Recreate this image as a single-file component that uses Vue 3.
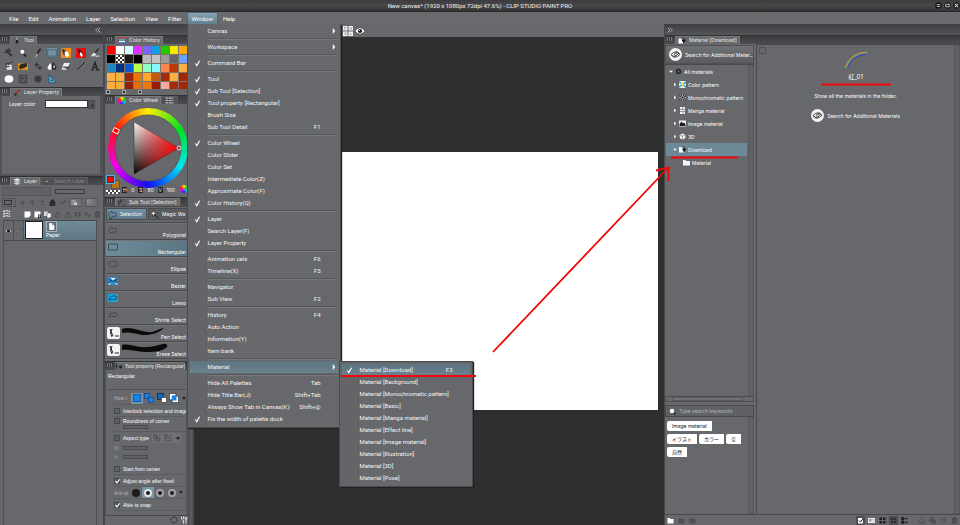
<script setup>
const menusBefore = ['File', 'Edit', 'Animation', 'Layer', 'Selection', 'View', 'Filter']

const groups = [
  [{ t: 'Canvas', sub: true }],
  [{ t: 'Workspace', sub: true }],
  [{ t: 'Command Bar', on: true }],
  [
    { t: 'Tool', on: true },
    { t: 'Sub Tool [Selection]', on: true },
    { t: 'Tool property [Rectangular]', on: true },
    { t: 'Brush Size' },
    { t: 'Sub Tool Detail', k: 'F1' },
  ],
  [
    { t: 'Color Wheel', on: true },
    { t: 'Color Slider' },
    { t: 'Color Set' },
    { t: 'Intermediate Color(Z)' },
    { t: 'Approximate Color(F)' },
    { t: 'Color History(Q)', on: true },
  ],
  [{ t: 'Layer', on: true }, { t: 'Search Layer(F)' }, { t: 'Layer Property', on: true }],
  [{ t: 'Animation cels', k: 'F6' }, { t: 'Timeline(X)', k: 'F5' }],
  [{ t: 'Navigator' }, { t: 'Sub View', k: 'F2' }],
  [{ t: 'History', k: 'F4' }, { t: 'Auto Action' }, { t: 'Information(Y)' }, { t: 'Item bank' }],
  [{ t: 'Material', sub: true, open: true }],
  [
    { t: 'Hide All Palettes', k: 'Tab' },
    { t: 'Hide Title Bar(J)', k: 'Shift+Tab' },
    { t: 'Always Show Tab in Canvas(K)', k: 'Shift+@' },
    { t: 'Fix the width of palette dock', on: true },
  ],
]

const materials = [
  'Download', 'Background', 'Monochromatic pattern', 'Basic', 'Manga material',
  'Effect line', 'Image material', 'Illustration', '3D', 'Pose',
]

const tools = [
  { n: 'Operation', d: '<path d="M3 4l9 9M7 1l2 3M1 7l3 1M4 2l2 5 5-3" stroke="#2c2c2e" stroke-width="2" fill="none"/><path d="M9 8l5 3-3 1 0 3z" fill="#2c2c2e"/>' },
  { n: 'Zoom', d: '<path d="M9 9l4 5" stroke="#222" stroke-width="2.6"/><circle cx="7" cy="6" r="4" fill="#fff" stroke="#333" stroke-width="1"/>' },
  { n: 'Eyedropper', d: '<path d="M4 15l5-9" stroke="#bbb" stroke-width="1.6"/><path d="M7 9l5-8" stroke="#222" stroke-width="3"/>' },
  { n: 'Selection', on: true, d: '<rect x="1" y="3" width="14" height="10" fill="none" stroke="#202c34" stroke-width="1" stroke-dasharray="2 1"/>' },
  { n: 'Pen', d: '<rect width="16" height="16" fill="#f58a12"/><path d="M1 1l6 2 4 8-2 4-5-5z" fill="#333"/><path d="M6 5l5 1 2 6-4 3-3-4z" fill="#fff"/>' },
  { n: 'Marker', d: '<rect width="16" height="16" fill="#f4060c"/><path d="M3 1l5 3 3 7-2 3-4-5z" fill="#222"/><path d="M7 6l4 5-2 4-3-5z" fill="#fff"/>' },
  { n: 'Brush', d: '<path d="M14 1l-6 7" stroke="#222" stroke-width="2"/><path d="M1 13l5-6 4 2-2 4z" fill="#ddd"/><path d="M9 13h6" stroke="#ccc" stroke-width="2"/>' },
  { n: 'Airbrush', d: '<path d="M5 6h7l1 8H4z" fill="#e4e4e4"/><path d="M1 5l6-1 7-3M3 9h6M7 3v4" stroke="#333" stroke-width="1.5" fill="none"/>' },
  { n: 'Decoration', d: '<path d="M0 4h16v10H0z" fill="#f5930f"/><path d="M1 9l3-4 10-2 1 5-5 3-7 2z" fill="#2d2a22"/>' },
  { n: 'Effect', d: '<path d="M6 2v8M2 6h8M11 8v6M8 11h6" stroke="#35353a" stroke-width="1.8"/>' },
  { n: 'Blend', d: '<path d="M5 3l4 7q0 4-4 4t-4-4z" fill="#fff"/><path d="M10 1l5 8q0 5-4 5t-4-4z" fill="#222"/><path d="M11 5l2 5-3 2z" fill="#eee"/>' },
  { n: 'Eraser', d: '<path d="M5 3h9l-2 6H2z" fill="#f0f0f0"/><path d="M2 10h8l-1 4H1z" fill="#ddd"/><path d="M2 9h10l2-5v4l-3 5z" fill="#444"/>' },
  { n: 'Figure', d: '<path d="M2 14L14 2" stroke="#222" stroke-width="1.6"/>' },
  { n: 'Text', d: '<path d="M2 14h4M9 14h6M4 13L8 2l4 12M5 10h6" stroke="#222" stroke-width="2" fill="none"/>' },
  { n: 'Balloon', d: '<ellipse cx="8" cy="8" rx="7" ry="6" fill="#fff"/>' },
  { n: 'Frame', d: '<path d="M2 2h12v12H2zM2 6h12M6 6v8M9 8l3 5" stroke="#3b3b3f" stroke-width="1.6" fill="none"/>' },
  { n: 'Gradient', d: '<circle cx="8" cy="8" r="6" fill="#47474a"/><circle cx="8" cy="8" r="4" fill="#3a3a3c"/>' },
  { n: 'Ruler', d: '<path d="M3 1v13h12z" fill="#49b4ea" stroke="#1d3b4c" stroke-width="1"/><path d="M6 8v3h4z" fill="#333"/>' },
]

const swatches = [
  '#ff0000', '#ffffff', '#d8ffff', '#d933ff', '#7a63ff', '#0aa0e6', '#28c800', '#f8e800', '#ffaa0a',
  '#000000', 'checker', '#1a1a1a', '#000000', '#b8babc', '#c4c4c4', '#9a9a9a', '#66666a', '#6aa2ff',
  '#2585b8', '#003080', '#0a5cd0', '#b8ff46', '#8cffc4', '#88faff', '#ff8450', '#b83a08', '#ffb043',
  '#ffb043', '#ffb043', '#98240a', '#e8780e', '#ffa82a', '#c05a0c', '#a8280a', '#ffb043', '#a02808',
  '#ffae3e', '#ffae3e', '#902008', '#e0700e', '#e87a10', '#981c08', '#f8a8a0', '#a82a08', '#a02808',
]

const subTools = [
  { t: 'Polygonal', d: '<path d="M1 7l7-5v3h9v7H8v2H4z" fill="none" stroke="#3a3a3e" stroke-width="1.2"/>' },
  { t: 'Rectangular', on: true, d: '<rect x="1" y="2" width="18" height="12" fill="none" stroke="#24343e" stroke-width="1.4"/>' },
  { t: 'Ellipse', d: '<ellipse cx="10" cy="8" rx="9" ry="5.5" fill="none" stroke="#3a3a3e" stroke-width="1.2"/>' },
  { t: 'Bezier', d: '<rect width="20" height="16" fill="#2f8fd0"/><path d="M2 13q2-9 8-4 6-5 8 4M2 3l6 6M18 3l-6 6" stroke="#0d2c48" stroke-width="1.6" fill="none"/><path d="M5 2h10l-5 5z" fill="#e8f4fb"/><path d="M1 12h4v3H1zM15 12h4v3h-4z" fill="#bfe0f4"/>' },
  { t: 'Lasso', d: '<rect width="20" height="16" fill="#16a5de"/><path d="M4 13c-4-6 3-10 10-9s4 8-3 7-5-1-7 2" fill="none" stroke="#0b3550" stroke-width="1.6"/>' },
  { t: 'Shrink Select', d: '<path d="M3 13c-4-6 4-10 11-9s4 8-3 7-5-1-7 2" fill="none" stroke="#35353a" stroke-width="1.4"/>' },
  { t: 'Pen Select', pen: 'M1 3C10 0 18 5 26 6S36 3 43 2C38 7 30 9 24 9S8 5 1 7z' },
  { t: 'Erase Select', pen: 'M1 2C8 0 15 5 26 4S36 2 42 1c5-1 5 3 3 4-6 4-13 4-21 4S8 6 1 7z' },
]

const tree = [
  { t: 'All materials', lv: 0, open: true, d: '<circle cx="7" cy="7" r="5.5" fill="#2a2a2c"/><circle cx="7" cy="7" r="2" fill="#777"/>' },
  { t: 'Color pattern', lv: 1, d: '<rect width="14" height="14" fill="#eef6fa"/><path d="M0 0l7 5 7-5v5L9 7l5 3v4L7 9l-7 5v-4l5-3-5-3z" fill="#3aa7d8"/><path d="M4 5l3-3 3 3-3 7z" fill="#f2e04a"/>' },
  { t: 'Monochromatic pattern', lv: 1, d: '<rect x="1" y="1" width="12" height="12" fill="#3a3a3c"/><path d="M7 0v14M0 7h14M2 2l10 10M12 2L2 12" stroke="#ddd" stroke-width="1.2"/><circle cx="7" cy="7" r="2" fill="#333"/>' },
  { t: 'Manga material', lv: 1, d: '<path d="M2 0h10v14H2z" fill="#f2f2f2"/><path d="M2 5h10M7 0v5M2 9h10M8 9v5" stroke="#444" stroke-width="1"/>' },
  { t: 'Image material', lv: 1, d: '<rect x="0" y="1" width="14" height="12" fill="#f2f2f2"/><path d="M1 12V8l4-5 3 4 2-2 3 4v3z" fill="#1a1a1a"/>' },
  { t: '3D', lv: 1, d: '<path d="M1 4l6-3 6 3v6l-5 3-6-2z" fill="#f0f0f0"/><path d="M7 6l6-2M7 6v7M7 6L1 4" stroke="#666" fill="none"/>' },
  { t: 'Download', lv: 1, open: true, on: true, d: '<path d="M0 2h5l1 2h3v9H0z" fill="#fff"/><path d="M10 1v6M7 6h7l-4 5z" stroke="#111" fill="#111" stroke-width="1.5"/>' },
  { t: 'Material', lv: 2, d: '<path d="M0 2h5l1 2h8v9H0z" fill="#f4f4f4"/>' },
]

const tagRows = [['Image material'], ['イラスト', 'カラー', '空'], ['自然']]

const layerRow1 = ['<path d="M2 8q5-8 10 0-5 6-10 0" fill="#505155"/>', '<path d="M7 1v12M4 4h6v5H4z" stroke="#505155" stroke-width="1.6" fill="none"/>', '<path d="M7 1v12M3 5h8" stroke="#505155" stroke-width="2"/>']
const layerRow2 = [
  { n: 'New raster layer', d: '<path d="M1 1h12v8l-4 4H1z" fill="#fff"/>' },
  { n: 'New vector layer', d: '<path d="M1 1h12v8l-4 4H1z" fill="#fff"/><path d="M8 7h6v7H8z" fill="#2c2c2e"/><path d="M11 8v5M9 10h4" stroke="#fff"/>' },
  { n: 'New folder', d: '<path d="M0 1h8v9H0z" fill="#ddd"/><path d="M6 4h8v7l-3 3H6z" fill="#fff" stroke="#333"/>' },
  { n: 'Transfer down', d: '<path d="M7 1v6M4 4l3 4 3-4M2 8q0 5 5 5t5-5" stroke="#48494d" stroke-width="1.5" fill="none"/>' },
  { n: 'Combine', d: '<path d="M7 1v6M4 4l3 4 3-4M2 8v5h10V8" stroke="#48494d" stroke-width="1.5" fill="none"/>' },
  { n: 'Create mask', d: '<path d="M1 3h12v8H1z" fill="#4d4e52"/><circle cx="7" cy="7" r="2" fill="#77787c"/>' },
  { n: 'Apply mask', d: '<path d="M1 2h7v8H1zM6 6h7v7H6z" fill="#4d4e52" stroke="#77787c"/>' },
  { n: 'Delete layer', d: '<path d="M2 3h10M5 1h4M3 4l1 9h6l1-9" stroke="#48494d" stroke-width="2" fill="#55565a"/>' },
]

const shapeModes = [
  { n: 'New selection', on: true, d: '<rect x="2" y="2" width="12" height="12" fill="#1583e8" stroke="#0a3f88"/>' },
  { n: 'Add to selection', d: '<rect x="1" y="1" width="8" height="8" fill="#1583e8" stroke="#0a3f88"/><rect x="7" y="7" width="8" height="8" fill="#1583e8" stroke="#0a3f88"/>' },
  { n: 'Subtract from selection', d: '<rect x="1" y="1" width="9" height="9" fill="#1568b8" stroke="#111"/><rect x="7" y="7" width="8" height="8" fill="#fff" stroke="#333"/>' },
  { n: 'Select from selection', d: '<rect x="1" y="1" width="10" height="10" fill="#fff" stroke="#333"/><rect x="5" y="5" width="10" height="10" fill="#fff" stroke="#333"/><rect x="5" y="4" width="7" height="8" fill="#1583e8"/>' },
]
const antiAlias = ['None', 'Weak', 'Medium', 'Strong']

const footIcons = [
  { n: 'Show thumbnails', on: true, d: '<path d="M2 2h10v11H2z" fill="#fff"/><path d="M4 7l3 3 6-8" stroke="#111" stroke-width="2" fill="none"/>' },
  { n: 'Details', d: '<path d="M0 2h14v10H0z" fill="#eee"/><path d="M2 4h5v5H2z" fill="#999"/><path d="M9 5h4M9 8h4" stroke="#888"/>' },
  { n: 'Large tiles', d: '<path d="M1 1h5v5H1zM8 1h5v5H8zM1 8h5v5H1zM8 8h5v5H8z" fill="#1d1d1f"/>' },
  { n: 'Small tiles', on: true, d: '<path d="M2 2h4v4H2zM8 2h4v4H8zM2 8h4v4H2zM8 8h4v4H8z" fill="#2b2b2d"/>' },
  { n: 'List', d: '<path d="M1 1h5v5H1zM1 8h5v5H1zM8 3h5v1H8zM8 10h5v1H8z" fill="#1d1d1f" stroke="#1d1d1f"/>' },
]
const footIconsDim = [
  { n: 'Paste material', d: '<path d="M2 13V6l5-4 5 4v7zM5 9h4" fill="none" stroke="#4c4d51" stroke-width="1.6"/>' },
  { n: 'Duplicate material', d: '<path d="M1 1h8v8H1zM6 6h7v7H6z" fill="#56575b" stroke="#48494d"/>' },
  { n: 'Material property', d: '<circle cx="7" cy="7" r="4" fill="none" stroke="#4c4d51" stroke-width="3" stroke-dasharray="2 1"/>' },
  { n: 'Delete material', d: '<path d="M2 3h10M5 1h4M3 4l1 9h6l1-9" stroke="#48494d" stroke-width="2" fill="#55565a"/>' },
]
</script>

<template>
  <div class="app">
    <header class="titlebar">
      <span class="title">New canvas* (1920 x 1080px 72dpi 47.6%) - CLIP STUDIO PAINT PRO</span>
      <span class="winbtns">
        <button aria-label="Minimize"><svg viewBox="0 0 16 16"><circle cx="8" cy="8" r="7.5" fill="#151515" /><path d="M4 6h8M4 10h8" stroke="#ddd" stroke-width="2" /></svg></button>
        <button aria-label="Maximize"><svg viewBox="0 0 16 16"><circle cx="8" cy="8" r="7.5" fill="#151515" /><path d="M4 5h8v6H4z" stroke="#ddd" stroke-width="2" fill="none" /></svg></button>
        <button aria-label="Close"><svg viewBox="0 0 16 16"><circle cx="8" cy="8" r="7.5" fill="#151515" /><path d="M4 4l8 8M12 4l-8 8" stroke="#eee" stroke-width="2.4" /></svg></button>
      </span>
    </header>

    <nav class="menubar">
      <button v-for="m in menusBefore" :key="m" class="mb">{{ m }}</button>
      <div class="mbwrap">
        <button class="mb active">Window</button>
        <div class="menu">
          <div v-for="(g, i) in groups" :key="i" class="group">
            <div v-for="it in g" :key="it.t" class="itemwrap">
              <button class="item" :class="{ open: it.open }">
                <span class="chk"><svg v-if="it.on" viewBox="0 0 10 10"><path d="M2 5l2 3 4-7" /></svg></span>
                <span class="lbl">{{ it.t }}</span>
                <span v-if="it.k" class="key">{{ it.k }}</span>
                <svg v-if="it.sub" class="arr" viewBox="0 0 6 10"><path d="M1 0l4 5-4 5z" fill="#fff" /></svg>
              </button>
              <div v-if="it.open" class="menu submenu">
                <button v-for="(s, j) in materials" :key="s" class="item" :class="{ open: j === 0 }">
                  <span class="chk"><svg v-if="j === 0" viewBox="0 0 10 10"><path d="M2 5l2 3 4-7" /></svg></span>
                  <span class="lbl">Material [{{ s }}]</span>
                  <span v-if="j === 0" class="key">F3</span>
                </button>
              </div>
            </div>
          </div>
        </div>
      </div>
      <button class="mb">Help</button>
    </nav>

    <div class="work">
      <!-- first dock -->
      <aside class="dock dock1">
        <div class="band"><svg class="chev" viewBox="0 0 10 10"><path d="M5 1L1 5l4 4M9 1L5 5l4 4" /></svg></div>
        <div class="tabs">
          <i class="grip"></i>
          <span class="tab"><svg viewBox="0 0 10 16"><path d="M5 0v8" stroke="#ccc" stroke-width="1.5" /><path d="M3 7h4l1 5-3 4-3-4z" fill="#222" /></svg>Tool</span>
        </div>
        <div class="tools">
          <button v-for="t in tools" :key="t.n" :aria-label="t.n" :class="{ on: t.on }"><svg viewBox="0 0 16 16" v-html="t.d"></svg></button>
        </div>
        <div class="tabs">
          <i class="grip"></i>
          <span class="tab"><svg viewBox="0 0 16 16"><path d="M14 1L7 9" stroke="#c2201c" stroke-width="3" /><path d="M1 14l3-5 4 2-2 4z" fill="#111" /><path d="M3 12l3-3 2 2z" fill="#e02a20" /></svg>Layer Property</span>
        </div>
        <div class="layerprop">
          <div class="lc"><span>Layer color</span><button class="colorbox" aria-label="Layer color"></button><button class="colormore" aria-label="More colors"><svg viewBox="0 0 6 10"><path d="M1 1l4 4-4 4z" fill="#222" /></svg></button></div>
        </div>
        <div class="tabs">
          <i class="grip"></i>
          <span class="tab"><svg viewBox="0 0 16 16"><path d="M1 4l7-3 7 3-7 3zM1 8l7 3 7-3M1 12l7 3 7-3" fill="#eee" stroke="#eee" /></svg>Layer</span>
          <span class="tab dim"><svg viewBox="0 0 16 16"><path d="M1 8l7-3 5 3-5 3zM3 13l6 2" fill="#999" stroke="#333" /></svg>Search Layer</span>
        </div>
        <div class="layertools">
          <div class="lrow"><select class="blend" aria-label="Blending mode"><option></option></select><span class="opacity"></span></div>
          <div class="lrow icons">
            <button class="pal" aria-label="Palette color"><i></i></button>
            <button v-for="(d, i) in layerRow1" :key="i" :aria-label="'Layer option ' + (i + 1)"><svg viewBox="0 0 14 14" v-html="d"></svg></button>
            <button aria-label="Lock layer"><svg viewBox="0 0 14 14"><path d="M4 6V3q3-3 6 0v3M2 6h10v7H2z" stroke="#222" stroke-width="1.6" fill="#333" /></svg></button>
            <button aria-label="Lock transparency"><svg viewBox="0 0 14 14"><path d="M1 11l5-5 3 3 4-7" stroke="#444" stroke-width="2" fill="none" /></svg></button>
            <button class="wide" aria-label="Mask options"><svg viewBox="0 0 14 14"><path d="M1 2h9v9H1z" fill="#999" /><path d="M5 6h8v7H5z" fill="#ccc" stroke="#555" /></svg></button>
            <button class="wide" aria-label="Ruler options"><svg viewBox="0 0 14 14"><path d="M1 2h9L2 11zM6 13l7-8" fill="#777" stroke="#aaa" /></svg></button>
          </div>
          <div class="lrow icons second">
            <svg class="stack" viewBox="0 0 16 16"><path d="M1 3q7-3 14 0M1 8q7-3 14 0M1 13q7-3 14 0" stroke="#eee" stroke-width="2.4" fill="none" stroke-dasharray="5 1" /></svg>
            <span class="fill"></span>
            <button v-for="b in layerRow2" :key="b.n" :aria-label="b.n"><svg viewBox="0 0 14 14" v-html="b.d"></svg></button>
          </div>
        </div>
        <div class="layers">
          <div class="layer">
            <span class="cell"><svg viewBox="0 0 16 12"><path d="M1 6q7-7 14 0-7 7-14 0" fill="#ccc" /><circle cx="8" cy="6" r="3.500" fill="#111" /></svg></span>
            <span class="cell"><svg viewBox="0 0 16 16"><path d="M2 14l3-5 8-7-5 8z" fill="#ddd" stroke="#222" /></svg></span>
            <span class="lmain"><i class="thumb"></i><span class="lname"><svg viewBox="0 0 20 20"><rect x="1" y="1" width="18" height="18" fill="#5d7684" stroke="#dde" /><path d="M5 3h7l4 4v10H5z" fill="#fff" stroke="#333" /><path d="M12 3v4h4" fill="none" stroke="#333" /></svg>Paper</span></span>
          </div>
        </div>
      </aside>

      <!-- second dock -->
      <aside class="dock dock2">
        <div class="band"></div>
        <div class="tabs">
          <i class="grip"></i>
          <span class="tab"><svg viewBox="0 0 14 16"><path d="M0 1h14v3H0z" fill="#e33" /><path d="M0 5h14v3H0z" fill="#4bd" /><path d="M0 9h14v3H0z" fill="#eee" /><path d="M0 13h14v3H0z" fill="#3a6ae0" /></svg>Color History</span>
        </div>
        <div class="swatches">
          <button v-for="(c, i) in swatches" :key="i" :aria-label="'Color ' + (i + 1)" :class="{ checker: c === 'checker' }" :style="c === 'checker' ? null : { backgroundColor: c }"></button>
        </div>
        <div class="swbtns"><i></i><i></i><i></i></div>
        <div class="tabs">
          <i class="grip"></i>
          <span class="tab"><i class="miniwheel"></i>Color Wheel</span>
          <span class="tab dim sliders"><svg viewBox="0 0 16 12"><path d="M1 2h14M1 6h14M1 10h14" stroke="#bbb" stroke-width="2" stroke-dasharray="5 1" /></svg></span>
        </div>
        <div class="wheelbox">
          <div class="wheel">
            <svg viewBox="0 0 80 80">
              <defs>
                <linearGradient id="bw" x1="0" y1="0" x2="0" y2="1"><stop offset="0" stop-color="#fff" /><stop offset="1" stop-color="#000" /></linearGradient>
                <linearGradient id="rd" x1="0" y1="0" x2="1" y2="0"><stop offset="0" stop-color="#f00" stop-opacity="0" /><stop offset="1" stop-color="#f00" /></linearGradient>
              </defs>
              <circle cx="40" cy="40" r="33" fill="#67686c" stroke="#55565a" stroke-width="1" />
              <path d="M26 14v52l45-26z" fill="url(#bw)" />
              <path d="M26 14v52l45-26z" fill="url(#rd)" stroke="#333" stroke-width=".5" />
              <circle cx="71" cy="40" r="2" fill="none" stroke="#ddd" stroke-width="1" />
              <path d="M6.500 19.500l5 2.500-2 4-5-2.500z" fill="#f00" stroke="#fff" stroke-width="1" />
            </svg>
          </div>
          <div class="wheelfoot">
            <span class="curcol"><i class="bg"></i><i class="fg"></i><i class="tr"></i></span>
            <span class="hsv"><b>H</b>0<b>S</b>50<b>V</b>100</span>
            <i class="miniwheel"></i>
          </div>
        </div>
        <div class="tabs">
          <i class="grip"></i>
          <span class="tab"><svg viewBox="0 0 18 16"><path d="M2 3v12M6 0v8" stroke="#222" stroke-width="2" /><rect x="9" y="2" width="8" height="12" fill="none" stroke="#222" stroke-dasharray="2 1" /></svg>Sub Tool [Selection]</span>
        </div>
        <div class="stgroups">
          <button class="on"><svg viewBox="0 0 16 16"><path d="M1 6l6-4v3h7v7H7v3H3z" fill="none" stroke="#2a3b45" stroke-width="1.200" /></svg>Selection</button>
          <button><svg viewBox="0 0 16 16"><path d="M7 7l8 8" stroke="#222" stroke-width="2" /><path d="M6 0l1.500 4.500L12 6 7.500 7.500 6 12 4.500 7.500 0 6l4.500-1.500z" fill="#fff" stroke="#222" /></svg>Magic Wa</button>
        </div>
        <div class="subtools">
          <button v-for="s in subTools" :key="s.t" :class="{ on: s.on }">
            <svg v-if="s.d" class="sico" viewBox="0 0 20 16" v-html="s.d"></svg>
            <svg v-else class="spen" viewBox="0 0 74 16"><rect width="13" height="12" y="1" rx="2" fill="#f3f3f3" /><path d="M3 3l3 7M5 3q-3 4 0 8M8 10h4" stroke="#222" fill="none" /><path :d="s.pen" fill="#0b0b0b" transform="translate(14 0)" /></svg>
            <span>{{ s.t }}</span>
          </button>
        </div>
        <div class="tabs">
          <i class="grip"></i>
          <span class="tab snug"><svg viewBox="0 0 20 16"><path d="M4 0v14M1 7h5" stroke="#222" stroke-width="2" /><circle cx="14" cy="9" r="4" fill="#222" /></svg>Tool property [Rectangular]</span>
        </div>
        <div class="props">
          <div class="phead">Rectangular</div>
          <div class="prow mode">
            <span class="pl">How t</span>
            <button v-for="m in shapeModes" :key="m.n" :aria-label="m.n" :class="{ on: m.on }"><svg viewBox="0 0 16 16" v-html="m.d"></svg></button>
            <i class="dd"></i>
          </div>
          <label class="prow"><input type="checkbox">Interlock selection and image</label>
          <div class="prow two">
            <label><input type="checkbox">Roundness of corner</label><i class="bar"></i>
          </div>
          <div class="prow aspect">
            <label><input type="checkbox">Aspect type</label>
            <span class="modes"><svg viewBox="0 0 14 14"><path d="M1 1h5v5H1zM7 7h5v5H7zM12 1L1 12" fill="none" stroke="#4b4c50" stroke-width="1.500" /></svg><svg viewBox="0 0 14 14"><path d="M1 1h4v4H1zM2 7h10v5H2zM8 5l5-4" fill="none" stroke="#4b4c50" stroke-width="1.500" /></svg><i class="dd"></i></span>
          </div>
          <div class="wh"><div>W<i class="bar"></i></div><div>H<i class="bar"></i></div></div>
          <label class="prow"><input type="checkbox">Start from center</label>
          <label class="prow"><input type="checkbox" checked>Adjust angle after fixed</label>
          <div class="prow aa">
            <span class="pl">Anti-al</span>
            <button v-for="(a, i) in antiAlias" :key="a" :aria-label="a" :class="{ on: i === 1 }"><i :class="'dot d' + i"></i></button>
            <i class="dd"></i>
          </div>
          <label class="prow last"><input type="checkbox" checked>Able to snap</label>
          <i class="pscroll"></i>
        </div>
        <div class="pfoot">
          <svg viewBox="0 0 16 16"><circle cx="8" cy="8" r="6" fill="none" stroke="#1f1f21" stroke-width="2" stroke-dasharray="3 1.500" /></svg>
          <svg viewBox="0 0 16 16"><path d="M3 1v5l4 3v6M7 1v5M12 1v14M9 3l3 4 4-4" fill="none" stroke="#e0e0e0" stroke-width="2" /></svg>
        </div>
      </aside>

      <main class="center">
        <div class="cmdbar">
          <svg viewBox="0 0 20 20"><path d="M0 0h9v9H0zM11 0h9v9h-9zM0 11h9v9H0zM11 11h9v9h-9z" fill="#eee" /><path d="M3 3h4M3 3v4M14 3v4M17 3v4M3 14h4M5 14v4M14 14l3 4" stroke="#777" stroke-width="1.200" /></svg>
          <svg viewBox="0 0 20 20"><path d="M0 10q10-13 20 0-10 13-20 0" fill="#fff" stroke="#222" stroke-width="1" /><circle cx="10" cy="10" r="4" fill="#111" /><circle cx="9" cy="9" r="1.200" fill="#fff" /></svg>
        </div>
        <div class="stage"><div class="paper"></div></div>
      </main>

      <!-- material dock -->
      <aside class="dock dock3">
        <div class="band left"><svg class="chev" viewBox="0 0 10 10"><path d="M1 1l4 4-4 4M5 1l4 4-4 4" /></svg></div>
        <div class="tabs">
          <i class="grip"></i>
          <span class="tab"><svg viewBox="0 0 14 14"><path d="M0 3h5l1 2h3v8H0z" fill="#fff" /><path d="M10 1v6M7 6h7l-4 5z" stroke="#111" fill="#111" stroke-width="1.500" /></svg>Material [Download]</span>
        </div>
        <div class="mat">
          <div class="matleft">
            <button class="searchadd"><svg class="logo" viewBox="0 0 24 24"><circle cx="12" cy="12" r="12" fill="#f4f4f4" /><path d="M4 12q7-9 16 0-8 9-16 0M9 12q3-5 7 0-3 5-7 0M4 12q3 6 8 5M20 12q-2-6-8-5" fill="none" stroke="#333" stroke-width="1.600" /></svg><span>Search for Additional Mater...</span></button>
            <div class="treebox">
              <ul class="tree">
                <li v-for="n in tree" :key="n.t"><button :class="['lv' + n.lv, { on: n.on }]">
                  <svg v-if="n.lv < 2" class="tw" viewBox="0 0 10 10"><path :d="n.open ? 'M0 3h10L5 8z' : 'M3 0l5 5-5 5z'" fill="#fff" /></svg>
                  <svg class="ti" viewBox="0 0 14 14" v-html="n.d"></svg>{{ n.t }}</button></li>
              </ul>
              <i class="vs"></i>
            </div>
            <div class="hs"><i></i></div>
            <label class="kw"><svg viewBox="0 0 14 14"><path d="M8 8l5 5" stroke="#222" stroke-width="2.500" /><circle cx="6" cy="6" r="4.500" fill="#fff" /></svg><input type="text" placeholder="Type search keywords" aria-label="Type search keywords"></label>
            <div class="tagbox">
              <div class="tags">
                <div v-for="(row, i) in tagRows" :key="i" class="tagrow"><button v-for="t in row" :key="t">{{ t }}</button></div>
              </div>
              <i class="vs"></i>
            </div>
          </div>
          <div class="matmain">
            <div class="list">
              <input type="checkbox" class="all" aria-label="Select all">
              <svg class="rainbow" viewBox="0 0 24 18" fill="none" stroke-width="1"><path d="M1 17Q6 1 23 1" stroke="#d8863c" /><path d="M1.800 17Q7 1.800 23 1.800" stroke="#7cb84a" /><path d="M2.600 17Q8 2.600 23 2.600" stroke="#2b9ac0" /><path d="M3.400 17Q9 3.400 22 3.400" stroke="#5a2ab8" /></svg>
              <span class="rname">虹_01</span>
              <span class="show">Show all the materials in the folder.</span>
              <a href="#" class="addlink"><svg class="logo" viewBox="0 0 24 24"><circle cx="12" cy="12" r="12" fill="#f4f4f4" /><path d="M4 12q7-9 16 0-8 9-16 0M9 12q3-5 7 0-3 5-7 0M4 12q3 6 8 5M20 12q-2-6-8-5" fill="none" stroke="#333" stroke-width="1.600" /></svg>Search for Additional Materials</a>
            </div>
            <i class="vs"></i>
          </div>
        </div>
        <div class="matfoot">
          <button aria-label="New folder"><svg viewBox="0 0 14 14"><path d="M1 2h5l1 2h6v9H1z" fill="#fff" /></svg></button>
          <button aria-label="Edit folder"><svg viewBox="0 0 14 14"><path d="M1 2h5l1 2h6v9H1z" fill="#505155" /></svg></button>
          <button aria-label="Delete folder"><svg viewBox="0 0 14 14"><path d="M1 2h5l1 2h6v9H1z" fill="#505155" /></svg></button>
          <span class="fill"></span>
          <button v-for="b in footIcons" :key="b.n" :aria-label="b.n" :class="{ on: b.on }"><svg viewBox="0 0 14 14" v-html="b.d"></svg></button>
          <i class="gap"></i>
          <button v-for="b in footIconsDim" :key="b.n" :aria-label="b.n"><svg viewBox="0 0 14 14" v-html="b.d"></svg></button>
        </div>
      </aside>
    </div>

    <svg class="marks" viewBox="0 0 960 525" fill="none" stroke="#f00808" stroke-width="1.800">
      <path d="M341 376H476M671 157.500H738M821 84.500H891" />
      <path d="M493 352L668 168M656 170.500L668.500 167.500V181" />
    </svg>
  </div>
</template>

<style>
body { background: #2f2f2f; }
</style>

<style scoped>
* { box-sizing: border-box; }
button, input, select { font: inherit; color: inherit; background: none; border: 0; padding: 0; margin: 0; border-radius: 0; appearance: none; }
svg { display: block; flex: none; }
i, b { font-style: normal; font-weight: 400; display: block; flex: none; }
.fill { flex: 1; }
.app { position: relative; display: flex; flex-direction: column; height: 100vh; overflow: hidden; background: #67686c; color: #fff; font: 5px/8px Inter, "Noto Sans CJK JP", sans-serif; white-space: nowrap; }

.titlebar { display: flex; align-items: center; justify-content: center; position: relative; height: 12px; flex: none; background: linear-gradient(#3c3c3d, #48484a 50%, #343435); border-bottom: 1px solid #2a2a2b; font-family: Roboto, sans-serif; font-size: 6px; color: #f0f0f0; }
.winbtns { position: absolute; right: 0; display: flex; gap: 2px; }
.winbtns svg { width: 7px; height: 7px; }

.menubar { display: flex; height: 12px; flex: none; padding-left: 4px; background: #696a6e; font-family: Roboto, sans-serif; font-size: 6px; }
.mb { padding: 0 5px; height: 12px; line-height: 11px; display: block; }
.mb.active { background: linear-gradient(#84a2b2, #64808f); border: 1px solid #52656f; border-bottom: 0; padding: 0 4px; line-height: 10px; }
.mbwrap { position: relative; }
.menu { position: absolute; z-index: 5; top: 100%; left: 0; width: 154px; padding: 1px 2px 2px; border: 1px solid #4a4b4f; border-top-width: 0; background: linear-gradient(90deg, #646569 18px, #5f6064 18px, #5f6064 19px, #67686c 19px); box-shadow: 1px 1px 1px #222; }
.group + .group { position: relative; padding-top: 4px; }
.group + .group::before { content: ""; position: absolute; top: 1px; left: 18px; right: 0; border-top: 1px solid #56575b; border-bottom: 1px solid #76777b; }
.itemwrap { position: relative; }
.item { display: flex; align-items: center; width: 100%; height: 12px; padding-right: 17px; text-align: left; color: #f4f4f4; }
.item.open { background: linear-gradient(#5d7481, #6c828e); }
.chk { width: 18px; padding-left: 4px; flex: none; }
.chk svg { width: 7px; height: 7px; }
.chk path { fill: none; stroke: #fff; stroke-width: 1.6; }
.lbl { flex: 1; }
.arr { width: 4px; height: 6px; margin-right: -15px; }
.submenu { left: calc(100% + 1px); top: 0; width: 134px; padding: 2px; border-top-width: 1px; }

.work { display: flex; flex: 1; min-height: 0; }
.dock { display: flex; flex-direction: column; flex: none; min-height: 0; background: #67686c; }
.dock1 { width: 105px; border-right: 2px solid #47484b; }
.dock2 { width: 89px; padding-right: 6px; background: linear-gradient(90deg, #67686c calc(100% - 7px), #4a4b4e calc(100% - 6px), #5c5d61 calc(100% - 3px), #454649); }
.dock3 { width: 296px; border-left: 1px solid #47484b; }
.band { height: 11px; flex: none; display: flex; justify-content: flex-end; align-items: center; padding: 0 2px; background: linear-gradient(#3e3f41, #55565a); }
.band.left { justify-content: flex-start; }
.chev { width: 6px; height: 6px; fill: none; stroke: #c4c4c4; stroke-width: 1.2; }
.tabs { display: flex; align-items: flex-end; height: 9px; flex: none; background: linear-gradient(#3a3b3d, #4c4d50); border-top: 1px solid #303133; overflow: hidden; }
.grip { width: 5px; height: 4px; margin: 0 3px 3px 2px; background: repeating-linear-gradient(90deg, #77787c 0 1px, #303133 1px 2px); }
.tab { display: flex; align-items: center; gap: 3px; height: 8px; padding: 0 2px; background: #67686c; border: 1px solid #78797d; border-bottom: 0; color: #e8e8e8; line-height: 7px; }
.tab svg { width: 8px; height: 7px; }
.tab.snug { gap: 2px; padding: 0; border-width: 1px 0 0; font-family: "Liberation Sans", sans-serif; }
.tab.dim { background: #505155; color: #888; border-color: #5c5d61; }

.tools { display: grid; grid-template-columns: repeat(7, 1fr); grid-auto-rows: 13px; padding: 2px 1px 2px 2px; }
.tools button { display: flex; align-items: center; justify-content: center; }
.tools svg { width: 10px; height: 10px; }
.tools .on { background: #7391a2; border: 1px solid #4f6673; margin: 1px; }
.layerprop { height: 80px; flex: none; padding: 3px 4px; border: 1px solid #525357; border-width: 0 3px 2px 2px; }
.lc { display: flex; align-items: center; height: 10px; padding-left: 3px; }
.lc > span { width: 36px; }
.colorbox { width: 43px; height: 8px; background: #fff; border: 1px solid #333; }
.colormore { width: 7px; height: 9px; padding: 2px; background: #55565a; border: 1px solid #48494c; }
.colormore svg { width: 3px; height: 5px; }

.layertools { flex: none; height: 35px; }
.lrow { display: flex; align-items: center; height: 12px; padding: 0 2px; gap: 4px; }
.blend { width: 49px; height: 9px; border: 1px solid #55565a; background: #616266; }
.opacity { width: 30px; height: 5px; border: 1px solid #3c3d40; }
.icons { gap: 3px; height: 11px; }
.icons svg { width: 7px; height: 7px; }
.icons .pal { width: 14px; height: 9px; padding: 1px; border: 1px solid #525357; }
.pal i { width: 8px; height: 5px; border: 1px solid #333; }
.icons .wide { width: 13px; height: 9px; padding: 0 1px; background: #707175; border: 1px solid #57585c; }
.icons.second { height: 12px; }
.icons .stack { width: 9px; height: 8px; }
.layers { flex: 1; margin-left: 3px; margin-right: 6px; border-left: 1px solid #505155; border-right: 1px solid #505155; }
.layer { display: flex; height: 21px; border: 1px solid #48494c; border-width: 1px 0; }
.cell { width: 10px; display: flex; align-items: center; justify-content: center; border-right: 1px solid #505155; }
.cell svg { width: 7px; height: 6px; }
.lmain { display: flex; flex: 1; background: linear-gradient(#708b99, #5e7783); gap: 2px; }
.thumb { width: 18px; height: 18px; margin-left: 1px; border: 1px solid #222; background: #fff; }
.lname { line-height: 7px; padding-left: 1px; }
.lname svg { width: 11px; height: 11px; }

.swatches { display: grid; grid-template-columns: repeat(9, 9px); grid-auto-rows: 9px; height: 43px; overflow: hidden; margin: 2px 0 0 2px; flex: none; }
.swatches button { border: 1px solid #7c7468; border-width: 0 1px 1px 0; }
.checker { background: repeating-conic-gradient(#333 0 25%, #fff 0 50%) 0 0 / 4px 4px; }
.swbtns { display: flex; gap: 12px; height: 6px; flex: none; padding: 1px 1px; }
.swbtns i { width: 4px; height: 4px; background: #222; border: 1px solid #aaa; }
.miniwheel { width: 8px; height: 8px; border-radius: 50%; background: radial-gradient(#888 20%, transparent 22%), conic-gradient(from -60deg, #f22, #fe0, #1c1, #0cd, #13e, #e0e, #f22); }
.sliders svg { width: 11px; }
.wheelbox { height: 93px; flex: none; padding: 4px 0 0 3px; overflow: hidden; }
.wheel { width: 80px; height: 80px; border-radius: 50%; background: conic-gradient(#ffee00, #00e020 60deg, #00e8f0 120deg, #1010f0 180deg, #f000f0 240deg, #ff1010 300deg, #ffee00); }
.wheelfoot { position: relative; display: flex; align-items: center; margin-top: -14px; height: 24px; padding-left: 2px; }
.curcol { position: relative; width: 22px; height: 20px; margin: -4px 0 0 -4px; }
.curcol i { position: absolute; }
.fg { left: 0; top: 1px; width: 9px; height: 9px; background: #f00; border: 1px solid #5ab0e0; outline: 1px solid #333; outline-offset: -2px; }
.bg { left: 5px; top: 6px; width: 9px; height: 9px; background: #b87010; border: 1px solid #555; }
.tr { left: 0; bottom: 0; width: 14px; height: 4px; background: repeating-conic-gradient(#444 0 25%, #fff 0 50%) 0 0 / 4px 4px; }
.hsv { display: flex; gap: 4px; padding: 7px 5px 0 5px; }
.hsv b { width: 5px; height: 6px; line-height: 6px; background: #222; text-align: center; margin-top: 1px; }
.wheelfoot .miniwheel { margin-top: 6px; }

.stgroups { display: flex; height: 15px; flex: none; padding: 1px 0 1px 1px; gap: 1px; overflow: hidden; border-top: 1px solid #48494c; }
.stgroups button { display: flex; align-items: center; gap: 3px; width: 41px; flex: none; padding-left: 1px; background: #5a5b5f; border: 1px solid #4a4b4e; }
.stgroups button + button { width: 39px; border-right: 0; }
.stgroups .on { background: linear-gradient(#7090a2, #5f7a89); }
.stgroups svg { width: 9px; height: 9px; }
.subtools { margin: 1px 1px 2px 1px; border-top: 1px solid #48494c; flex: none; }
.subtools button { display: flex; width: 100%; height: 17px; align-items: flex-start; justify-content: space-between; position: relative; border-bottom: 1px solid #48494c; border-top: 1px solid #737478; }
.subtools button.on { background: linear-gradient(90deg, #6f8c9b, #5c7582); }
.subtools span { position: absolute; right: 1px; bottom: 0; line-height: 7px; }
.sico { width: 10px; height: 8px; margin: 2px 0 0 2px; }
.spen { width: 74px; height: 16px; margin-left: 1px; }

.props { position: relative; flex: 1; min-height: 0; padding: 0 2px; overflow: hidden; border-left: 1px solid #525357; font-family: "Liberation Sans", sans-serif; }
.phead { height: 20px; padding-top: 2px; border-bottom: 1px solid #505155; margin-bottom: 2px; }
.prow { display: flex; align-items: center; gap: 3px; height: 12px; margin: 0 0 0 6px; border-bottom: 1px solid #5c5d61; }
.prow label { display: flex; align-items: center; gap: 3px; }
.prow input { width: 6px; height: 6px; border: 1px solid #48494c; background: #5d5e62; position: relative; flex: none; }
.prow input:checked::after { content: ""; position: absolute; left: 1px; top: -1px; width: 2px; height: 4px; border: solid #fff; border-width: 0 1px 1px 0; transform: rotate(40deg); }
.mode { height: 13px; gap: 1px; }
.pl { width: 16px; color: #b4b4b6; flex: none; }
.mode button { width: 12px; height: 11px; display: flex; align-items: center; justify-content: center; }
.mode svg { width: 10px; height: 10px; }
.mode .on, .aa .on { background: #7896a6; }
.dd { border: 2px solid transparent; border-top: 3px solid #222; border-bottom: 0; margin-left: 1px; }
.two { flex-direction: column; align-items: flex-start; height: 15px; gap: 0; }
.bar { width: 25px; height: 4px; border: 1px solid #48494c; background: #606165; }
.two .bar { margin-left: 9px; }
.aspect { border-bottom: 0; }
.modes { display: flex; align-items: center; gap: 3px; padding: 1px; background: #707175; }
.modes svg { width: 8px; height: 8px; }
.wh { display: flex; flex-direction: column; gap: 1px; padding-left: 6px; margin-bottom: 1px; color: #9c9c9e; height: 18px; }
.wh div { display: grid; grid-template-columns: 9px auto; align-items: center; justify-content: start; }
.aa { gap: 0; }
.aa button { width: 12px; height: 11px; display: flex; align-items: center; justify-content: center; }
.dot { width: 8px; height: 8px; border-radius: 50%; background: #1c1c1e; }
.d1 { border: 2px solid #e4e4e4; }
.d2, .d3 { border: 2px solid #a4a4a6; }
.pscroll { position: absolute; right: 0; top: 28px; bottom: 0; width: 2px; background: #55565a; }
.pfoot { display: flex; justify-content: flex-end; gap: 2px; height: 10px; flex: none; border-top: 1px solid #48494c; }
.pfoot svg { width: 8px; height: 8px; }

.center { flex: 1; min-width: 0; display: flex; flex-direction: column; }
.cmdbar { display: flex; align-items: center; gap: 2px; height: 13px; flex: none; padding-left: 149px; background: #67686c; }
.cmdbar svg { width: 10px; height: 10px; }
.stage { flex: 1; display: flex; align-items: center; justify-content: center; padding: 0 6px; background: #2f2f2f; }
.paper { width: 100%; aspect-ratio: 16 / 9; background: #fff; }

.mat { display: flex; flex: 1; min-height: 0; }
.matleft { width: 89px; display: flex; flex-direction: column; flex: none; }
.searchadd { display: flex; align-items: center; gap: 3px; height: 19px; padding: 0 0 0 3px; margin-top: 1px; background: linear-gradient(#707175, #5a5b5f); border: 1px solid #505155; flex: none; overflow: hidden; }
.logo { width: 13px; height: 13px; }
.treebox { flex: 1; display: flex; border-top: 1px solid #48494c; }
.tree { list-style: none; margin: 0; padding: 0 1px; flex: 1; min-width: 0; }
.tree button { display: flex; align-items: center; gap: 2px; width: 100%; height: 13px; padding-left: 3px; }
.tree .lv1 { padding-left: 7px; }
.tree .lv2 { padding-left: 17px; }
.tree .on { background: #6d8896; }
.tw { width: 4px; height: 5px; }
.ti { width: 7px; height: 7px; }
.vs { width: 6px; border: 1px solid #57585c; background: #606165; }
.hs { height: 6px; flex: none; border: 1px solid #4d4e51; margin-bottom: 3px; }
.hs i { height: 4px; margin: 0 10px 0 6px; background: #707175; border: 1px solid #57585c; }
.kw { display: flex; align-items: center; gap: 3px; height: 12px; flex: none; padding-left: 3px; border: 1px solid #48494c; background: #606165; }
.kw svg { width: 7px; height: 7px; }
.kw input { width: 72px; outline: 0; }
.kw input::placeholder { color: #b4b4b6; opacity: 1; }
.tagbox { display: flex; height: 97px; flex: none; }
.tags { flex: 1; display: flex; flex-direction: column; gap: 3px; padding: 4px 0 0 2px; }
.tagrow { display: flex; gap: 2px; }
.tags button { height: 10px; padding: 0 5px; background: #fff; color: #111; line-height: 10px; border-radius: 2px 0 0 2px; }
.matmain { flex: 1; display: flex; margin-left: 2px; border-left: 1px solid #48494c; border-top: 1px solid #48494c; }
.list { position: relative; flex: 1; display: flex; flex-direction: column; align-items: center; padding-top: 6px; }
.all { position: absolute; left: 2px; top: 2px; width: 7px; height: 7px; border: 1px solid #505155; }
.rainbow { width: 24px; height: 18px; }
.rname { margin-top: 4px; font-size: 6px; }
.show { margin-top: 11px; }
.addlink { display: flex; align-items: center; gap: 3px; margin-top: 9px; color: inherit; text-decoration: none; }
.matfoot { display: flex; align-items: center; gap: 2px; height: 11px; flex: none; padding: 0 1px; border-top: 1px solid #48494c; }
.matfoot svg { width: 7px; height: 7px; }
.matfoot button { padding: 1px; }
.matfoot .on { background: #4c4d51; }
.gap { width: 4px; }

.marks { position: absolute; z-index: 9; top: 0; left: 0; width: 100%; height: 100%; pointer-events: none; }
</style>
